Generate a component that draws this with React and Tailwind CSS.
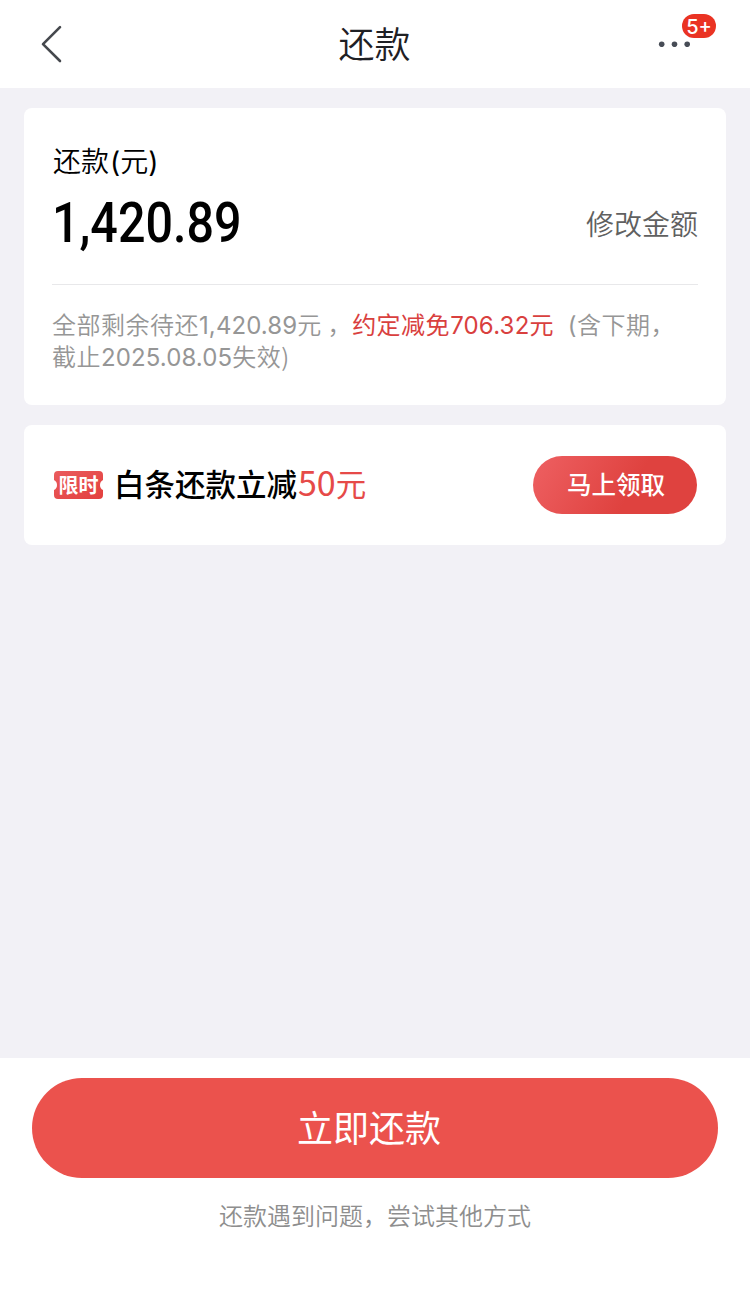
import React from 'react';

const BackIcon = () => (
  <svg width="22" height="38" viewBox="0 0 22 38" fill="none" stroke="#45484d" strokeWidth="2.6" strokeLinecap="round" strokeLinejoin="round">
    <path d="M20 2.2 L3 19.2 L20 36" />
  </svg>
);

const MoreIcon = () => (
  <svg width="32" height="6" viewBox="0 0 32 6" fill="#474c56">
    <circle cx="3.7" cy="3.3" r="2.8" />
    <circle cx="16.5" cy="3.3" r="2.8" />
    <circle cx="29.2" cy="3.3" r="2.8" />
  </svg>
);

const TicketShape = () => (
  <svg className="absolute inset-0" width="49" height="28" viewBox="0 0 49 28">
    <defs>
      <linearGradient id="ticket" x1="0" y1="0" x2="1" y2="1">
        <stop offset="0" stopColor="#ea5c5e" />
        <stop offset="1" stopColor="#e33f3d" />
      </linearGradient>
    </defs>
    <path
      fill="url(#ticket)"
      d="M4 0 H45 Q49 0 49 4 V9 Q46 10.5 46 14 Q46 17.5 49 19 V24 Q49 28 45 28 H4 Q0 28 0 24 V19 Q3 17.5 3 14 Q3 10.5 0 9 V4 Q0 0 4 0 Z"
    />
  </svg>
);

const Header = () => (
  <header className="grid h-[88px] grid-cols-3 items-center bg-white">
    <button className="pl-10">
      <BackIcon />
    </button>
    <h1 className="pr-px pb-1 text-center text-[36px] leading-none font-[350] text-[#1f2024]">还款</h1>
    <div className="flex justify-end pr-[60px]">
      <div className="relative">
        <MoreIcon />
        <span className="absolute -top-[27px] left-[24px] flex h-6 w-[34px] items-center justify-center rounded-full bg-[#ea3323] pt-px font-[Inter] text-[20px] leading-none font-medium text-white">
          5+
        </span>
      </div>
    </div>
  </header>
);

const AmountCard = () => (
  <section className="h-[297px] rounded-lg bg-white px-7 pt-8">
    <p className="h-[40px] pl-px text-[28px] leading-[40px] font-[350] text-black">
      还款<span className="pl-px font-[Inter] leading-none font-normal">(</span>元
      <span className="font-[Inter] leading-none font-normal">)</span>
    </p>
    <div className="flex h-[86px] items-center justify-between">
      <span className="origin-left scale-x-[0.865] font-[Roboto] text-[56px] leading-none font-medium text-black">1,420.89</span>
      <button className="text-[28px] leading-none font-[350] text-[#606060]">修改金额</button>
    </div>
    <div className="mt-[18px] border-t border-[#e8e8ea]" />
    <p className="mt-[23px] text-[24px] leading-8 font-[350] tracking-[0.5px] whitespace-pre text-[#969696]">
      全部剩余待还<span className="font-[Inter] leading-none font-normal tracking-[0.1px]">1,420.89</span>元 ，
      <span className="font-normal text-[#d9403e]">
        约定减免<span className="font-[Inter] leading-none tracking-[0.2px]">706.32</span>元
      </span>
      {'  '}<span className="pl-0.5 font-[Inter] leading-none font-normal">(</span>含下期，
      <br />
      截止<span className="font-[Inter] leading-none font-normal tracking-[0.1px]">2025.08.05</span>失效)
    </p>
  </section>
);

const CouponCard = () => (
  <section className="mt-5 flex h-[120px] items-center justify-between rounded-lg bg-white pr-[29px] pl-[30px]">
    <div className="flex items-center">
      <span className="relative flex h-7 w-[49px] items-center justify-center">
        <TicketShape />
        <span className="relative text-[20px] leading-none font-bold text-white">限时</span>
      </span>
      <p className="ml-[11px] pb-1.5 text-[30.5px] leading-none font-medium text-black">
        白条还款立减<span className="pl-px font-normal text-[#e64a48]"><span className="text-[34px] leading-none">50</span>元</span>
      </p>
    </div>
    <button className="h-[58px] w-[164px] rounded-full bg-linear-[120deg,#ee6062_0%,#df423f_60%,#df423f_100%] pb-0.5 pl-0.5 text-[24.5px] leading-none font-medium text-white">
      马上领取
    </button>
  </section>
);

const Footer = () => (
  <footer className="h-[236px] bg-white px-8 pt-5">
    <button className="h-[100px] w-full rounded-full bg-[#eb524d] pr-3 pb-1 text-[36px] leading-none text-white">立即还款</button>
    <p className="mt-[21px] text-center text-[24px] leading-8 font-[350] text-[#8e8e8e]">还款遇到问题，尝试其他方式</p>
  </footer>
);

const App = () => {
  return (
    <div
      lang="zh-CN"
      className="flex h-[1294px] w-[750px] flex-col overflow-hidden bg-[#f2f1f6] font-['Noto_Sans_CJK_SC',sans-serif]"
    >
      <Header />
      <main className="flex-1 px-6 pt-5">
        <AmountCard />
        <CouponCard />
      </main>
      <Footer />
    </div>
  );
};

export default App;
